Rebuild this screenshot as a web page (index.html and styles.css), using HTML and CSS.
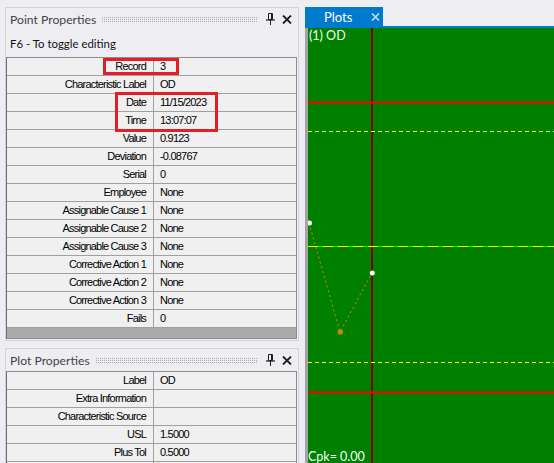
FILE: index.html
```html
<!DOCTYPE html>
<html>
<head>
	<meta charset="UTF-8">
	<title>Point Properties</title>
	<link rel="stylesheet" href="styles.css">
</head>
<body>
	<div class="side">
		<div class="panel panel-point">
			<div class="panel-head">
				<span class="panel-title">Point Properties</span>
				<span class="grip"></span>
				<svg class="pin" width="9" height="12" viewBox="0 0 9 12">
					<path d="M2.5 0.5h4v6h-4z M5.5 0.5v6" fill="none" stroke="#1e1e1e" stroke-width="1"/>
					<path d="M0 7h9" stroke="#1e1e1e" stroke-width="1.2"/>
					<path d="M4.5 7v5" stroke="#1e1e1e" stroke-width="1"/>
				</svg>
				<svg class="close" width="10" height="9" viewBox="0 0 10 9">
					<path d="M1 0.5l8 8M9 0.5l-8 8" stroke="#1e1e1e" stroke-width="1.8"/>
				</svg>
			</div>
			<div class="hint">F6 - To toggle editing</div>
			<div class="grid">
				<div class="row"><span class="key">Record</span><span class="val">3</span></div>
				<div class="row"><span class="key">Characteristic Label</span><span class="val">OD</span></div>
				<div class="row"><span class="key">Date</span><span class="val">11/15/2023</span></div>
				<div class="row"><span class="key">Time</span><span class="val">13:07:07</span></div>
				<div class="row"><span class="key">Value</span><span class="val">0.9123</span></div>
				<div class="row"><span class="key">Deviation</span><span class="val">-0.08767</span></div>
				<div class="row"><span class="key">Serial</span><span class="val">0</span></div>
				<div class="row"><span class="key">Employee</span><span class="val">None</span></div>
				<div class="row"><span class="key">Assignable Cause 1</span><span class="val">None</span></div>
				<div class="row"><span class="key">Assignable Cause 2</span><span class="val">None</span></div>
				<div class="row"><span class="key">Assignable Cause 3</span><span class="val">None</span></div>
				<div class="row"><span class="key">Corrective Action 1</span><span class="val">None</span></div>
				<div class="row"><span class="key">Corrective Action 2</span><span class="val">None</span></div>
				<div class="row"><span class="key">Corrective Action 3</span><span class="val">None</span></div>
				<div class="row"><span class="key">Fails</span><span class="val">0</span></div>
				<div class="grid-foot"></div>
				<div class="mark mark-record"></div>
				<div class="mark mark-when"></div>
			</div>
		</div>
		<div class="panel panel-plot">
			<div class="panel-head">
				<span class="panel-title">Plot Properties</span>
				<span class="grip"></span>
				<svg class="pin" width="9" height="12" viewBox="0 0 9 12">
					<path d="M2.5 0.5h4v6h-4z M5.5 0.5v6" fill="none" stroke="#1e1e1e" stroke-width="1"/>
					<path d="M0 7h9" stroke="#1e1e1e" stroke-width="1.2"/>
					<path d="M4.5 7v5" stroke="#1e1e1e" stroke-width="1"/>
				</svg>
				<svg class="close" width="10" height="9" viewBox="0 0 10 9">
					<path d="M1 0.5l8 8M9 0.5l-8 8" stroke="#1e1e1e" stroke-width="1.8"/>
				</svg>
			</div>
			<div class="grid">
				<div class="row"><span class="key">Label</span><span class="val">OD</span></div>
				<div class="row"><span class="key">Extra Information</span><span class="val"></span></div>
				<div class="row"><span class="key">Characteristic Source</span><span class="val"></span></div>
				<div class="row"><span class="key">USL</span><span class="val">1.5000</span></div>
				<div class="row"><span class="key">Plus Tol</span><span class="val">0.5000</span></div>
				<div class="row"><span class="key"></span><span class="val"></span></div>
			</div>
		</div>
	</div>

	<div class="plots">
		<div class="tabs">
			<div class="tab">
				<span>Plots</span>
				<svg width="9" height="8" viewBox="0 0 9 8">
					<path d="M1 0.5l7 7M8 0.5l-7 7" stroke="#c7dff3" stroke-width="1.6"/>
				</svg>
			</div>
		</div>
		<div class="chart">
			<svg width="246" height="435" viewBox="0 0 246 435">
				<rect x="63" y="0" width="2" height="435" fill="#800000"/>
				<rect x="0" y="73.5" width="246" height="2" fill="#ff0000"/>
				<line x1="0" y1="103.5" x2="246" y2="103.5" stroke="#ffff00" stroke-dasharray="4 3"/>
				<line x1="0" y1="218.5" x2="246" y2="218.5" stroke="#00ff00"/>
				<line x1="0" y1="218.5" x2="246" y2="218.5" stroke="#ffff00" stroke-dasharray="10 5"/>
				<line x1="0" y1="334.5" x2="246" y2="334.5" stroke="#ffff00" stroke-dasharray="4 3"/>
				<rect x="0" y="363.5" width="246" height="2" fill="#ff0000"/>
				<polyline points="1,195 32,304 64,245" fill="none" stroke="#d08a00" stroke-dasharray="2 3"/>
				<circle cx="1.5" cy="195" r="2.5" fill="#ffffff"/>
				<circle cx="32.3" cy="304" r="2.7" fill="#c88a00"/>
				<circle cx="64.3" cy="245" r="2.5" fill="#ffffff"/>
				<text x="1" y="12" class="chart-text">(1) OD</text>
				<text x="0" y="433" class="chart-text">Cpk= 0.00</text>
			</svg>
		</div>
	</div>
</body>
</html>
```

FILE: styles.css
```css
html, body {
	margin: 0;
	padding: 0;
}

body {
	width: 554px;
	height: 463px;
	overflow: hidden;
	display: flex;
	background: #eeeef2;
	font-family: Lato, "Noto Sans", sans-serif;
}

.side {
	width: 305px;
	flex: none;
	box-sizing: border-box;
	padding: 7px 0 0 5px;
	display: flex;
	flex-direction: column;
	gap: 7px;
}

.panel {
	width: 294px;
	box-sizing: border-box;
	border: 1px solid #d3d3dc;
	background: #eeeef2;
	flex: none;
}

.panel-point {
	height: 334px;
}

.panel-plot {
	flex: 1;
	border-bottom: none;
}

.panel-head {
	height: 22px;
	display: flex;
	align-items: center;
	padding-left: 4px;
}

.panel-title {
	font-size: 12.2px;
	color: #444;
	white-space: nowrap;
}

.grip {
	flex: 1;
	height: 5px;
	margin: 0 9px 0 6px;
	background-image: radial-gradient(circle at 0.5px 0.5px, #a9a9b6 0.55px, transparent 0.7px);
	background-size: 2px 2px;
}

.pin {
	margin-right: 7px;
}

.close {
	margin-right: 6px;
}

.hint {
	height: 27px;
	line-height: 27px;
	padding-left: 4px;
	font-size: 11.4px;
	color: #111;
}

.grid {
	position: relative;
	width: 291px;
	box-sizing: border-box;
	border: 1px solid #8d8d8d;
	border-left-color: #6e6e6e;
	background: #f0f0f0;
	font-family: "Liberation Sans", Arial, sans-serif;
	font-size: 11px;
	letter-spacing: -0.8px;
	color: #000;
}

.panel-plot .grid {
	border-bottom: none;
}

.row {
	display: flex;
	height: 18px;
	box-sizing: border-box;
	border-bottom: 1px solid #a0a0a0;
	line-height: 17px;
}

.key {
	width: 147px;
	flex: none;
	box-sizing: border-box;
	padding-right: 7px;
	text-align: right;
	border-right: 1px solid #a0a0a0;
	white-space: nowrap;
}

.val {
	flex: 1;
	padding-left: 6px;
	white-space: nowrap;
}

.grid-foot {
	height: 10px;
	background: #ababab;
}

.mark {
	position: absolute;
	box-sizing: border-box;
	border: 3px solid #e41e26;
}

.mark-record {
	left: 96px;
	top: 0;
	width: 76px;
	height: 17px;
}

.mark-when {
	left: 108px;
	top: 34px;
	width: 103px;
	height: 40px;
}

.plots {
	flex: 1;
	display: flex;
	flex-direction: column;
}

.tabs {
	padding-top: 7px;
	border-bottom: 2px solid #007acc;
	display: flex;
	height: 19px;
}

.tab {
	width: 78px;
	height: 19px;
	box-sizing: border-box;
	background: #007acc;
	color: #fff;
	font-size: 13px;
	display: flex;
	align-items: center;
	padding-left: 19px;
	gap: 19px;
}

.chart {
	flex: 1;
	border-left: 3px solid #a3a3a3;
	background: #008000;
	overflow: hidden;
}

.chart svg {
	display: block;
}

.chart-text {
	font-family: Lato, "Noto Sans", sans-serif;
	font-size: 12.5px;
	fill: #f4fff4;
}
```
